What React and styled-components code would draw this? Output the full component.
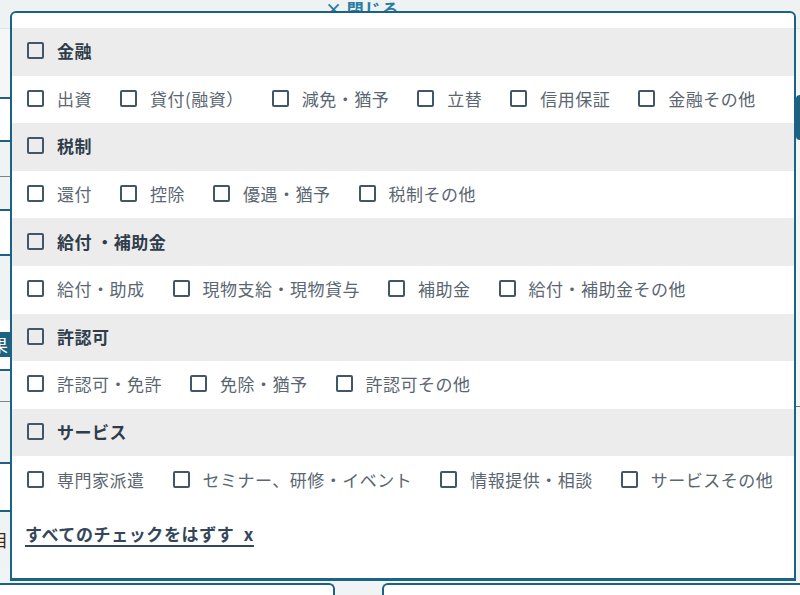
import React from 'react';
import styled, { createGlobalStyle } from 'styled-components';

const GlobalStyle = createGlobalStyle`
  html, body {
    margin: 0;
    padding: 0;
    background: #f1f4f4;
    font-family: "Noto Sans CJK JP", "Noto Sans", sans-serif;
  }
`;

const TEAL = '#1b6283';

const Stage = styled.div`
  position: relative;
  width: 800px;
  height: 595px;
  overflow: hidden;
  display: flex;
  flex-direction: column;
`;

const TopBand = styled.div`
  height: 28px;
  flex: none;
  background: #eef2f2;
  border-bottom: 1px solid #dfe5e5;
`;

const Middle = styled.div`
  flex: 1;
  display: flex;
  justify-content: space-between;
`;

const Rail = styled.div`
  width: ${(p) => p.$width}px;
  display: flex;
  flex-direction: column;
`;

const RailBlock = styled.div`
  height: ${(p) => p.$h}px;
  flex: none;
  box-sizing: content-box;
  display: flex;
  align-items: center;
  justify-content: flex-end;
  padding-right: 2px;
  background: ${(p) => p.$bg || '#f4f6f6'};
  border-bottom: ${(p) => (p.$line ? `${p.$lineW || 2}px solid ${p.$line}` : 'none')};
  color: ${(p) => p.$fg || '#333'};
  font-size: 17px;
  white-space: nowrap;
  overflow: hidden;
  border-radius: ${(p) => p.$radius || '0'};
`;

const BottomRow = styled.div`
  height: 13px;
  flex: none;
  display: flex;
  gap: 47px;
`;

const BottomButton = styled.div`
  flex: ${(p) => p.$grow};
  background: #fff;
  border-top: 2px solid ${TEAL};
  border-left: ${(p) => (p.$side === 'right' ? `2px solid ${TEAL}` : 'none')};
  border-right: ${(p) => (p.$side === 'left' ? `2px solid ${TEAL}` : 'none')};
  border-radius: ${(p) => (p.$side === 'left' ? '0 6px 0 0' : '6px 0 0 0')};
`;

const Overlay = styled.div`
  position: absolute;
  top: 0;
  left: 10px;
  width: 786px;
`;

const CloseLink = styled.div`
  height: 11px;
  padding-left: 315px;
  color: #2a7ca3;
  font-weight: 700;
  font-size: 17px;
  line-height: 1;
  overflow: hidden;
  display: flex;
  align-items: flex-end;
  span {
    display: block;
    transform: translateY(6px);
    letter-spacing: 0.5px;
  }
`;

const Modal = styled.div`
  height: 570px;
  box-sizing: border-box;
  background: #fff;
  border: 2px solid ${TEAL};
  border-bottom-width: 3px;
  border-radius: 6px 6px 0 0;
  padding-top: 15px;
`;

const Row = styled.div`
  display: flex;
  align-items: center;
  height: 47.6px;
  box-sizing: border-box;
  padding: 0 15px 2px;
  background: ${(p) => (p.$head ? '#ececec' : '#fff')};
`;

const Option = styled.label`
  display: flex;
  align-items: center;
  margin-right: 28px;
  font-size: 17px;
  letter-spacing: 0.5px;
  color: ${(p) => (p.$head ? '#2f3d4a' : '#5a6671')};
  font-weight: ${(p) => (p.$head ? 700 : 400)};
  white-space: nowrap;
`;

const Box = styled.span`
  width: 17px;
  height: 17px;
  box-sizing: border-box;
  border: 2px solid #415669;
  border-radius: 2px;
  margin-right: 13px;
  flex: none;
`;

const ClearLink = styled.a`
  display: inline-block;
  margin: 17px 0 0 13px;
  font-size: 17px;
  font-weight: 700;
  letter-spacing: 0.6px;
  word-spacing: 5px;
  color: #34475a;
  text-decoration: underline;
  text-decoration-thickness: 2px;
  text-underline-offset: 4px;
  line-height: 25px;
  cursor: pointer;
`;

const groups = [
  { title: '金融', items: ['出資', '貸付(融資）', '減免・猶予', '立替', '信用保証', '金融その他'] },
  { title: '税制', items: ['還付', '控除', '優遇・猶予', '税制その他'] },
  { title: '給付 ・補助金', items: ['給付・助成', '現物支給・現物貸与', '補助金', '給付・補助金その他'] },
  { title: '許認可', items: ['許認可・免許', '免除・猶予', '許認可その他'] },
  { title: 'サービス', items: ['専門家派遣', 'セミナー、研修・イベント', '情報提供・相談', 'サービスその他'] },
];

const leftRail = [
  { h: 68, bg: '#f5f7f7', line: TEAL },
  { h: 41, bg: '#fff', line: TEAL },
  { h: 34, bg: '#f0f3f3', line: '#7d8588', lineW: 1 },
  { h: 32, bg: '#f0f3f3', line: TEAL },
  { h: 43, bg: '#fff', line: TEAL },
  { h: 64, bg: '#f0f3f3' },
  { h: 12, bg: '#fff' },
  { h: 25, bg: TEAL, fg: '#fff', text: '果' },
  { h: 12, bg: '#fff', line: TEAL },
  { h: 30, bg: '#f0f3f3', line: '#7d8588', lineW: 1 },
  { h: 60, bg: '#f0f3f3', line: TEAL },
  { h: 46, bg: '#fff', line: TEAL },
  { h: 55, bg: '#f0f3f3', fg: '#3a2a10', text: '目' },
];

const rightRail = [
  { h: 66, bg: '#f3f5f5' },
  { h: 45, bg: TEAL, radius: '4px 0 0 4px' },
  { h: 266, bg: '#f3f5f5', line: '#6f777a', lineW: 1 },
  { h: 176, bg: '#f3f5f5' },
];

export default function App() {
  return (
    <>
      <GlobalStyle />
      <Stage>
        <TopBand />
        <Middle>
          <Rail $width={10}>
            {leftRail.map((b, i) => (
              <RailBlock key={i} $h={b.h} $bg={b.bg} $line={b.line} $lineW={b.lineW} $fg={b.fg}>
                {b.text}
              </RailBlock>
            ))}
          </Rail>
          <Rail $width={4}>
            {rightRail.map((b, i) => (
              <RailBlock key={i} $h={b.h} $bg={b.bg} $line={b.line} $lineW={b.lineW} $radius={b.radius} />
            ))}
          </Rail>
        </Middle>
        <BottomRow>
          <BottomButton $grow={335} $side="left" />
          <BottomButton $grow={418} $side="right" />
        </BottomRow>

        <Overlay>
          <CloseLink>
            <span>× 閉じる</span>
          </CloseLink>
          <Modal>
            {groups.map((g) => (
              <React.Fragment key={g.title}>
                <Row $head>
                  <Option $head>
                    <Box />
                    {g.title}
                  </Option>
                </Row>
                <Row>
                  {g.items.map((it) => (
                    <Option key={it}>
                      <Box />
                      {it}
                    </Option>
                  ))}
                </Row>
              </React.Fragment>
            ))}
            <ClearLink>すべてのチェックをはずす x</ClearLink>
          </Modal>
        </Overlay>
      </Stage>
    </>
  );
}
